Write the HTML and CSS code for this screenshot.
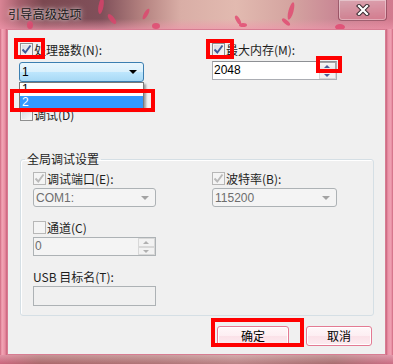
FILE: index.html
```html
<!DOCTYPE html>
<html lang="zh-CN">
<head>
    <meta charset="UTF-8">
    <meta name="viewport" content="width=device-width, initial-scale=1.0">
    <title>引导高级选项</title>
    <link rel="stylesheet" href="styles.css">
</head>
<body>
<div class="window">
    <div class="titlebar">
        <svg class="petals" width="393" height="29" viewBox="0 0 393 29">
            <ellipse cx="101" cy="6" rx="2.5" ry="8" transform="rotate(10 101 6)"/>
            <ellipse cx="112" cy="19" rx="2.5" ry="6" transform="rotate(-40 112 19)"/>
            <ellipse cx="146" cy="14" rx="2" ry="6" transform="rotate(30 146 14)"/>
            <ellipse cx="156" cy="26" rx="4" ry="3"/>
            <ellipse cx="238" cy="20" rx="2" ry="5" transform="rotate(-30 238 20)"/>
            <ellipse cx="243" cy="25" rx="4" ry="2"/>
            <ellipse cx="291" cy="11" rx="2.5" ry="9" transform="rotate(15 291 11)"/>
            <ellipse cx="286" cy="22" rx="2" ry="5" transform="rotate(-50 286 22)"/>
            <ellipse cx="340" cy="27" rx="5" ry="3"/>
            <ellipse cx="30" cy="25" rx="3" ry="4"/>
        </svg>
        <span class="title">引导高级选项</span>
        <div class="close">
            <svg width="14" height="12" viewBox="0 0 14 12">
                <path d="M3 2 L11 10 M11 2 L3 10" stroke="#3a2a30" stroke-width="4.2" stroke-linecap="square"/>
                <path d="M3 2 L11 10 M11 2 L3 10" stroke="#ffffff" stroke-width="2.2" stroke-linecap="square"/>
            </svg>
        </div>
    </div>

    <div class="client">
        <div class="top">
            <div class="col">
                <div class="check">
                    <span class="box"><svg width="11" height="11" viewBox="0 0 11 11"><path d="M1.5 5.5 L4.3 8.5 L9.5 1.5" fill="none" stroke="#3d5a98" stroke-width="1.9"/></svg></span>
                    <span>处理器数(N):</span>
                </div>
                <div class="combo hot"><span class="value">1</span><span class="arrow"></span></div>
                <div class="check debug">
                    <span class="box"></span>
                    <span>调试(D)</span>
                </div>
            </div>
            <div class="col">
                <div class="check">
                    <span class="box"><svg width="11" height="11" viewBox="0 0 11 11"><path d="M1.5 5.5 L4.3 8.5 L9.5 1.5" fill="none" stroke="#3d5a98" stroke-width="1.9"/></svg></span>
                    <span>最大内存(M):</span>
                </div>
                <div class="spin">
                    <span class="field">2048</span>
                    <span class="spinbtns"><span class="up hot"></span><span class="down"></span></span>
                </div>
            </div>
        </div>

        <fieldset class="group">
            <legend>全局调试设置</legend>
            <div class="group-body">
                <div class="col">
                    <div class="check off">
                        <span class="box"><svg width="11" height="11" viewBox="0 0 11 11"><path d="M1.5 5.5 L4.3 8.5 L9.5 1.5" fill="none" stroke="#b9b9b9" stroke-width="1.9"/></svg></span>
                        <span>调试端口(E):</span>
                    </div>
                    <div class="combo disabled"><span class="value">COM1:</span><span class="arrow"></span></div>
                    <div class="check off gap">
                        <span class="box"></span>
                        <span>通道(C)</span>
                    </div>
                    <div class="spin disabled">
                        <span class="field">0</span>
                        <span class="spinbtns"><span class="up"></span><span class="down"></span></span>
                    </div>
                    <div class="label gap">USB 目标名(T):</div>
                    <div class="textbox"></div>
                </div>
                <div class="col">
                    <div class="check off">
                        <span class="box"><svg width="11" height="11" viewBox="0 0 11 11"><path d="M1.5 5.5 L4.3 8.5 L9.5 1.5" fill="none" stroke="#b9b9b9" stroke-width="1.9"/></svg></span>
                        <span>波特率(B):</span>
                    </div>
                    <div class="combo disabled"><span class="value">115200</span><span class="arrow"></span></div>
                </div>
            </div>
        </fieldset>

        <div class="buttons">
            <button type="button" class="btn ok">确定</button>
            <button type="button" class="btn cancel">取消</button>
        </div>

        <!-- 펼쳐진 드롭다운 -->
        <ul class="droplist">
            <li>1</li>
            <li class="sel">2</li>
        </ul>

        <!-- 빨간 강조 테두리 -->
        <span class="mark mark-cpu"></span>
        <span class="mark mark-item"></span>
        <span class="mark mark-mem"></span>
        <span class="mark mark-spin"></span>
        <span class="mark mark-ok"></span>
    </div>
    <div class="bottomframe"></div>
</div>
</body>
</html>
```

FILE: styles.css
```css
body {
    margin: 0;
    font-family: "Liberation Sans", "Noto Sans CJK SC", sans-serif;
    font-size: 12px;
    color: #1e1e1e;
    background: #d98a9a;
}
.window {
    width: 393px;
    height: 364px;
    overflow: hidden;
    display: flex;
    flex-direction: column;
    background:
        linear-gradient(90deg, #cf6880 0, #f2a6b6 2px, #e88ea2 5px, #c8607a 7px, transparent 7px, transparent 386px, #c8607a 386px, #ea94a8 388px, #f0a0b2 391px, #cf6880 393px),
        #e090a0;
}
.titlebar {
    position: relative;
    height: 29px;
    flex: none;
    background:
        linear-gradient(180deg, rgba(255,255,255,0) 65%, rgba(240,150,172,0.65) 100%),
        linear-gradient(90deg, #d88494 0, #a45f6c 5%, #7b4850 11%, #80505a 26%, #b3817f 36%, #d9aea6 46%, #e2bab0 60%, #d4a4a0 74%, #c98694 86%, #d27a8e 100%);
}
.petals {
    position: absolute;
    left: 0;
    top: 0;
    fill: #e2416c;
    opacity: 0.75;
}
.title {
    position: absolute;
    left: 8px;
    top: 8px;
    line-height: 12px;
    font-family: "Noto Sans CJK SC", sans-serif;
    font-size: 12px;
    letter-spacing: 0.3px;
    color: #1a1a1a;
    text-shadow: 0 0 6px rgba(255,255,255,0.8), 0 0 3px rgba(255,255,255,0.6);
}
.close {
    position: absolute;
    left: 338px;
    top: -1px;
    width: 47px;
    height: 20px;
    border: 1px solid rgba(110,40,60,0.55);
    border-radius: 0 0 4px 4px;
    box-shadow: inset 0 0 0 1px rgba(255,255,255,0.35);
    background: linear-gradient(180deg, rgba(255,255,255,0.25), rgba(220,120,140,0.3));
    display: flex;
    align-items: center;
    justify-content: center;
}

.client {
    position: relative;
    box-sizing: border-box;
    width: 379px;
    height: 326px;
    margin: 0 7px;
    flex: none;
    border: 1px solid #d77c92;
    background: #f0f0f0;
    padding: 13px 12px 0 11px;
}
.top {
    display: grid;
    grid-template-columns: 125px 125px;
    column-gap: 68px;
}
.col {
    display: flex;
    flex-direction: column;
}

/* 체크박스 */
.check {
    display: flex;
    align-items: center;
    gap: 1px;
    height: 13px;
    line-height: 13px;
    font-family: "Noto Sans CJK SC", sans-serif;
    white-space: nowrap;
}
.top .col:first-child .check {
    margin-left: 1px;
}
.box {
    box-sizing: border-box;
    width: 13px;
    height: 13px;
    flex: none;
    border: 1px solid #8e8f8f;
    background: linear-gradient(135deg, #d4d8dd, #fbfbfb);
    box-shadow: inset 0 0 0 1px #f4f4f4;
    display: flex;
    align-items: center;
    justify-content: center;
}
.check.off .box {
    border-color: #b7b7b7;
    background: #f4f4f4;
    box-shadow: none;
}
.check.debug {
    margin-top: 26px;
}

/* 콤보박스 */
.combo {
    box-sizing: border-box;
    height: 20px;
    margin-top: 6px;
    border: 1px solid #adb2b5;
    border-radius: 3px;
    display: flex;
    align-items: center;
    justify-content: space-between;
    padding: 0 6px 0 2px;
    line-height: 16px;
}
.combo.hot {
    border-color: #3c7fb1;
    background: linear-gradient(180deg, #eaf6fd 0, #d9f0fc 50%, #bee6fd 50%, #a7d9f5 100%);
    color: #000;
}
.combo .arrow {
    width: 0;
    height: 0;
    border-left: 4px solid transparent;
    border-right: 4px solid transparent;
    border-top: 4px solid #000;
}
.combo.disabled {
    height: 19px;
    margin-top: 3px;
    background: #f4f4f4;
    color: #6d6d6d;
}
.combo.disabled .arrow {
    border-top-color: #a3a3a3;
}

/* 스핀 입력 */
.spin {
    box-sizing: border-box;
    height: 19px;
    margin-top: 5px;
    display: flex;
    border: 1px solid #abadb3;
    border-top-color: #8e9094;
    background: #fff;
}
.spin .field {
    flex: 1;
    padding-left: 1px;
    line-height: 16px;
    color: #000;
}
.spinbtns {
    width: 17px;
    display: flex;
    flex-direction: column;
}
.spinbtns span {
    flex: 1;
    position: relative;
    box-sizing: border-box;
    border: 1px solid #d8d8d8;
    background: #f2f2f2;
}
.spinbtns span.hot {
    border-color: #a3a3a3;
    background: linear-gradient(180deg, #f6f6f6, #e4e4e4);
}
.spinbtns span::after {
    content: "";
    position: absolute;
    left: 4px;
    top: 2px;
    border-left: 3px solid transparent;
    border-right: 3px solid transparent;
}
.spinbtns .up::after {
    border-bottom: 3px solid #4b5c94;
}
.spinbtns .down::after {
    border-top: 3px solid #4b5c94;
}
.spin.disabled {
    margin-top: 3px;
    border-color: #adb2b5;
    background: #f4f4f4;
}
.spin.disabled .field {
    color: #6d6d6d;
}
.spin.disabled .up::after {
    border-bottom-color: #b0b0b0;
}
.spin.disabled .down::after {
    border-top-color: #b0b0b0;
}

/* 그룹 박스 */
.group {
    margin: 32px 0 0 1px;
    padding: 0;
    width: 354px;
    box-sizing: border-box;
    min-width: 0;
    border: 1px solid #d5dfe5;
    border-radius: 3px;
    box-shadow: inset 1px 1px 0 #fff;
}
.group legend {
    margin-left: 4px;
    padding: 0 2px;
    line-height: 12px;
    font-family: "Noto Sans CJK SC", sans-serif;
}
.group-body {
    display: grid;
    grid-template-columns: 123px 125px;
    column-gap: 56px;
    align-items: start;
    padding: 7px 0 9px 12px;
}
.gap {
    margin-top: 14px;
}
.label {
    height: 13px;
    line-height: 13px;
    font-family: "Noto Sans CJK SC", sans-serif;
}
.textbox {
    box-sizing: border-box;
    height: 20px;
    margin-top: 3px;
    border: 1px solid #adb2b5;
    background: #f0f0f0;
}

/* 버튼 */
.buttons {
    display: flex;
    justify-content: flex-end;
    gap: 17px;
    margin-top: 10px;
    padding-right: 1px;
}
.btn {
    box-sizing: border-box;
    height: 20px;
    padding: 0;
    border: 1px solid #e47a93;
    border-radius: 3px;
    background: linear-gradient(180deg, #fff7f9 0, #fdeef2 50%, #fbe1e8 51%, #fcecf0 100%);
    box-shadow: inset 0 0 0 1px #fff;
    font-family: "Noto Sans CJK SC", sans-serif;
    font-size: 12px;
    line-height: 16px;
    color: #000;
}
.btn.ok {
    width: 72px;
}
.btn.cancel {
    width: 66px;
}

/* 드롭다운 목록 */
.droplist {
    position: absolute;
    left: 11px;
    top: 52px;
    width: 125px;
    margin: 0;
    padding: 0;
    list-style: none;
    box-sizing: border-box;
    border: 1px solid #7a7a7a;
    background: #fff;
    box-shadow: 2px 2px 2px rgba(0,0,0,0.35);
}
.droplist li {
    height: 12px;
    line-height: 12px;
    padding-left: 2px;
    color: #000;
}
.droplist li:first-child {
    height: 13px;
    line-height: 13px;
}
.droplist li.sel {
    background: #3399ff;
    color: #fff;
}

/* 빨간 표시 */
.mark {
    position: absolute;
    box-sizing: border-box;
    border: 4px solid #ff0000;
}
.mark-cpu { left: 6px; top: 8px; width: 31px; height: 21px; }
.mark-item { left: 2px; top: 59px; width: 145px; height: 23px; }
.mark-mem { left: 198px; top: 9px; width: 28px; height: 20px; }
.mark-spin { left: 308px; top: 26px; width: 26px; height: 17px; }
.mark-ok { left: 203px; top: 288px; width: 93px; height: 29px; }

.bottomframe {
    flex: 1;
    background:
        linear-gradient(180deg, rgba(255,255,255,0.25), rgba(120,40,60,0.15)),
        linear-gradient(90deg, #d87088 0, #b27272 10%, #b98080 40%, #c49090 60%, #b07878 85%, #d87890 100%);
}
```
